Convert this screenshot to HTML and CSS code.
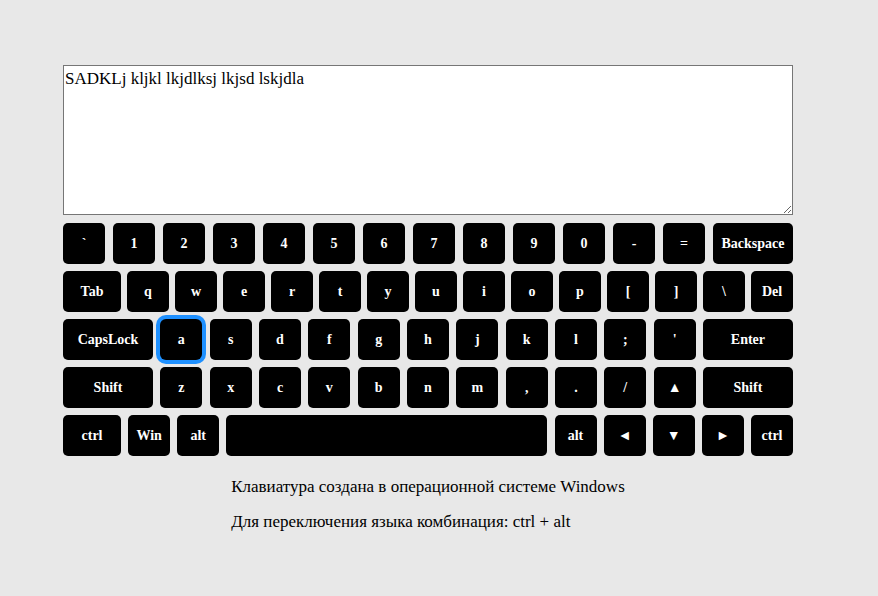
FILE: index.html
```html
<!DOCTYPE html>
<html lang="ru">
<head>
<meta charset="utf-8">
<title>Клавиатура</title>
<link rel="stylesheet" href="styles.css">
</head>
<body>
<div class="wrap">
  <textarea class="input" spellcheck="false">SADKLj kljkl lkjdlksj lkjsd lskjdla</textarea>
  <div class="keyboard">
    <div class="row">
      <div class="key">`</div><div class="key">1</div><div class="key">2</div><div class="key">3</div><div class="key">4</div><div class="key">5</div><div class="key">6</div><div class="key">7</div><div class="key">8</div><div class="key">9</div><div class="key">0</div><div class="key">-</div><div class="key">=</div><div class="key w80">Backspace</div>
    </div>
    <div class="row">
      <div class="key w58">Tab</div><div class="key">q</div><div class="key">w</div><div class="key">e</div><div class="key">r</div><div class="key">t</div><div class="key">y</div><div class="key">u</div><div class="key">i</div><div class="key">o</div><div class="key">p</div><div class="key">[</div><div class="key">]</div><div class="key">\</div><div class="key">Del</div>
    </div>
    <div class="row">
      <div class="key w90">CapsLock</div><div class="key active">a</div><div class="key">s</div><div class="key">d</div><div class="key">f</div><div class="key">g</div><div class="key">h</div><div class="key">j</div><div class="key">k</div><div class="key">l</div><div class="key">;</div><div class="key">'</div><div class="key w90">Enter</div>
    </div>
    <div class="row">
      <div class="key w90">Shift</div><div class="key">z</div><div class="key">x</div><div class="key">c</div><div class="key">v</div><div class="key">b</div><div class="key">n</div><div class="key">m</div><div class="key">,</div><div class="key">.</div><div class="key">/</div><div class="key">▲</div><div class="key w90">Shift</div>
    </div>
    <div class="row">
      <div class="key w58">ctrl</div><div class="key">Win</div><div class="key">alt</div><div class="key space"></div><div class="key">alt</div><div class="key">◄</div><div class="key">▼</div><div class="key">►</div><div class="key">ctrl</div>
    </div>
  </div>
  <div class="info">
    <p>Клавиатура создана в операционной системе Windows</p>
    <p>Для переключения языка комбинация: ctrl + alt</p>
  </div>
</div>
</body>
</html>
```
FILE: styles.css
```css
html, body {
  margin: 0;
  padding: 0;
  background: #e8e8e8;
}
body {
  font-family: "Liberation Serif", "Times New Roman", serif;
  font-size: 17px;
  color: #000;
}
.wrap {
  width: 730px;
  margin-left: 63px;
  padding-top: 65px;
}
.input {
  display: block;
  box-sizing: border-box;
  width: 730px;
  height: 150px;
  margin: 0;
  padding: 3px 1px;
  border: 1px solid #767676;
  background: #fff;
  font-family: "Liberation Serif", "Times New Roman", serif;
  font-size: 17px;
  color: #000;
  outline: none;
}
.keyboard {
  margin-top: 8px;
  display: flex;
  flex-direction: column;
  gap: 7px;
}
.row {
  display: flex;
  justify-content: space-between;
}
.key {
  box-sizing: border-box;
  width: 42px;
  height: 41px;
  background: #000;
  color: #fff;
  border-radius: 5px;
  display: flex;
  align-items: center;
  justify-content: center;
  font-family: "Liberation Serif", "Times New Roman", serif;
  font-weight: bold;
  font-size: 14px;
}
.w58 { width: 58px; }
.w80 { width: 80px; }
.w90 { width: 90px; }
.space { width: 321px; }
.active {
  box-shadow: 0 0 0 4px #1e90ff;
  border-radius: 6px;
}
.info {
  width: fit-content;
  margin: 21px auto 0;
}
.info p {
  margin: 0 0 16px;
  line-height: 19px;
}
```
